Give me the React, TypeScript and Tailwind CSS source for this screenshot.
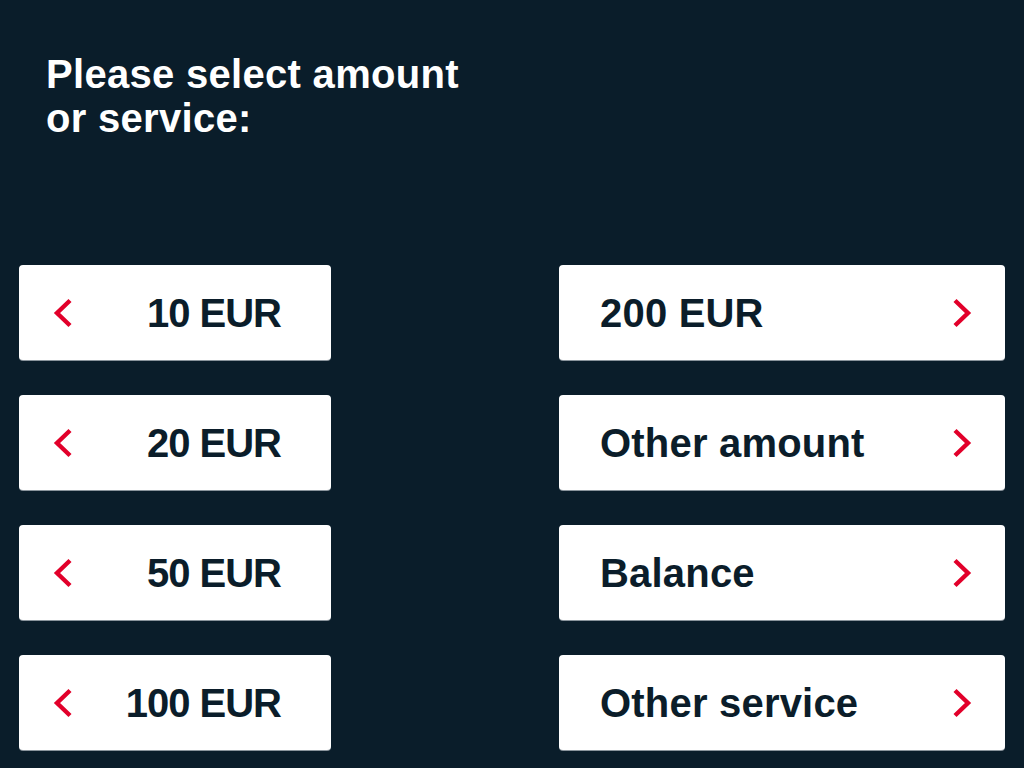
import React from "react";

const red = "#e2002a";

function ChevronLeft() {
  return (
    <svg width="20" height="30" viewBox="0 0 20 30" className="shrink-0">
      <polyline points="17,2.5 4,15 17,27.5" fill="none" stroke={red} strokeWidth="4.4" strokeLinecap="butt" strokeLinejoin="miter" />
    </svg>
  );
}

function ChevronRight() {
  return (
    <svg width="20" height="30" viewBox="0 0 20 30" className="shrink-0">
      <polyline points="3,2.5 16,15 3,27.5" fill="none" stroke={red} strokeWidth="4.4" strokeLinecap="butt" strokeLinejoin="miter" />
    </svg>
  );
}

const left = ["10 EUR", "20 EUR", "50 EUR", "100 EUR"];
const right = ["200 EUR", "Other amount", "Balance", "Other service"];

export default function App() {
  return (
    <div
      className="w-[1024px] h-[768px] overflow-hidden bg-[#0a1d2a] px-[19px]"
      style={{ fontFamily: '"Liberation Sans", Arial, Helvetica, sans-serif' }}
    >
      <h1 className="pl-[27px] pt-[52px] text-[40px] leading-[44px] font-bold text-white tracking-[0.3px]">
        Please select amount
        <br />
        or service:
      </h1>
      <div className="mt-[125px] flex justify-between">
        <div className="flex flex-col gap-[35px] w-[312px]">
          {left.map((t) => (
            <button
              key={t}
              className="h-[95px] w-full flex items-center bg-white rounded-[4px] shadow-[0_1px_0_#8a949c] pl-[34px] pr-[50px]"
            >
              <ChevronLeft />
              <span className="ml-auto text-[40px] font-bold text-[#0b1d2a] leading-none tracking-[-1px]">{t}</span>
            </button>
          ))}
        </div>
        <div className="flex flex-col gap-[35px] w-[446px]">
          {right.map((t) => (
            <button
              key={t}
              className="h-[95px] w-full flex items-center bg-white rounded-[4px] shadow-[0_1px_0_#8a949c] pl-[41px] pr-[33px]"
            >
              <span className="text-[40px] font-bold text-[#0b1d2a] leading-none tracking-[0.2px]">{t}</span>
              <span className="ml-auto">
                <ChevronRight />
              </span>
            </button>
          ))}
        </div>
      </div>
    </div>
  );
}
